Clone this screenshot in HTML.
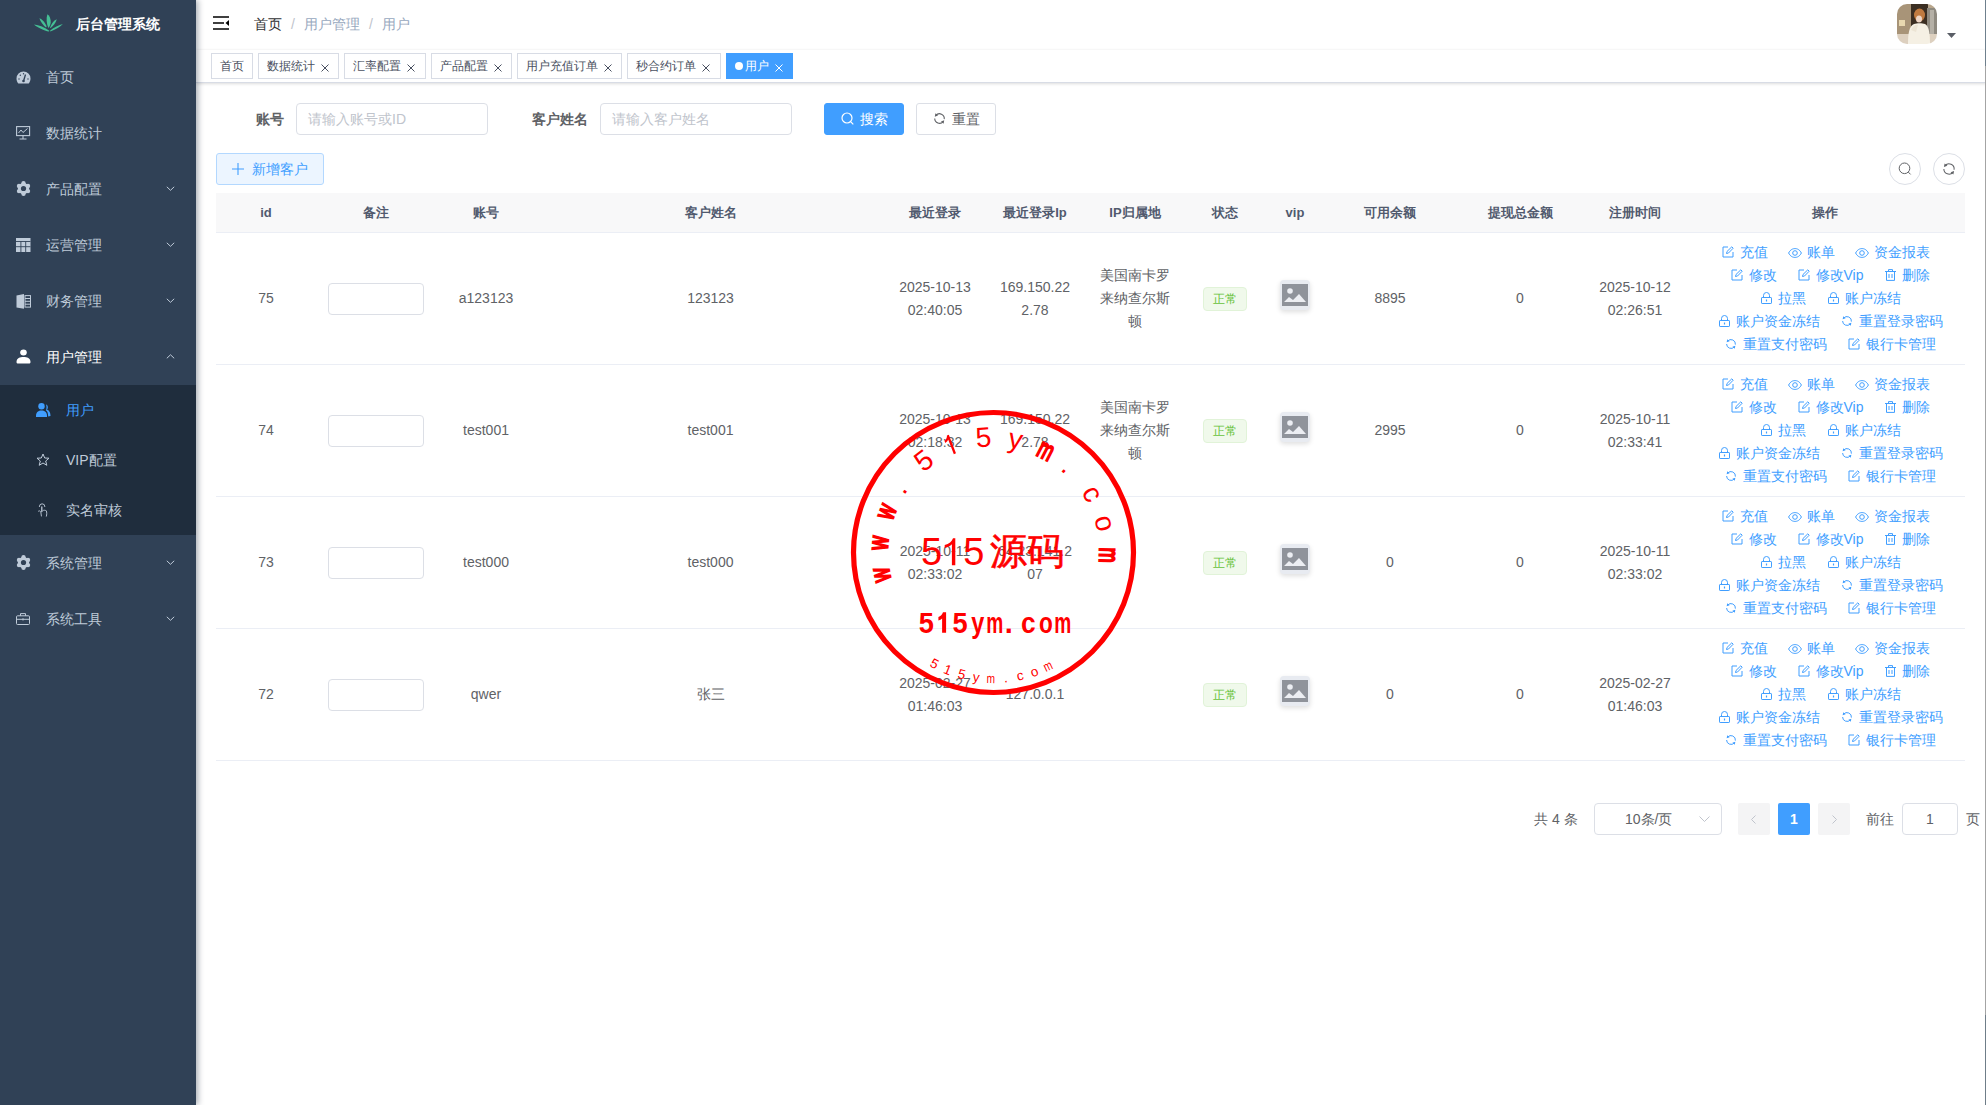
<!DOCTYPE html>
<html><head><meta charset="utf-8"><style>
*{box-sizing:border-box;margin:0;padding:0}
html,body{width:1986px;height:1105px;overflow:hidden;background:#fff;font-family:"Liberation Sans", sans-serif;}
.abs{position:absolute}
#side{position:absolute;left:0;top:0;width:196px;height:1105px;background:#304156;box-shadow:2px 0 6px rgba(0,21,41,.35);z-index:3}
.mi{position:absolute;left:0;width:196px;height:56px;color:#bfcbd9;font-size:14px;line-height:56px}
.mi .t{position:absolute;left:46px;top:0}
.mi svg{position:absolute;left:16px}
.mi .arr{position:absolute;left:165px;top:25px}
.sub{position:absolute;left:0;top:385px;width:196px;height:150px;background:#1f2d3d}
.si{position:absolute;left:0;width:196px;height:50px;color:#bfcbd9;font-size:14px;line-height:50px}
.si .t{position:absolute;left:66px;top:0}
.si svg{position:absolute;left:36px}
#nav{position:absolute;left:196px;top:0;width:1790px;height:50px;background:#fff;box-shadow:0 1px 4px rgba(0,21,41,.08);z-index:1}
#tags{position:absolute;left:196px;top:50px;width:1790px;height:33px;background:#fff;border-bottom:1px solid #d8dce5;box-shadow:0 1px 3px 0 rgba(0,0,0,.12),0 0 3px 0 rgba(0,0,0,.04);z-index:1}
.tag{position:absolute;top:3px;height:26px;line-height:24px;border:1px solid #d8dce5;color:#495060;font-size:12px;padding:0 8px;background:#fff;white-space:nowrap}
.tag .x{display:inline-block;margin-left:6px;vertical-align:-2px}
.lbl{position:absolute;font-size:14px;font-weight:bold;color:#606266;line-height:32px}
.inp{position:absolute;height:32px;border:1px solid #dcdfe6;border-radius:4px;background:#fff;color:#c0c4cc;font-size:14px;line-height:30px;padding-left:11px;white-space:nowrap}
.btn{position:absolute;height:32px;border-radius:3px;font-size:14px;line-height:30px;text-align:center;white-space:nowrap}
.th{position:absolute;top:193px;height:40px;background:#f8f8f9;border-bottom:1px solid #ebeef5;color:#515a6e;font-size:13px;font-weight:bold;line-height:39px;text-align:center}
.row{position:absolute;left:216px;width:1749px;height:132px;border-bottom:1px solid #ebeef5}
.c{position:absolute;top:0;height:131px;display:flex;align-items:center;justify-content:center;text-align:center;font-size:14px;color:#606266;line-height:23px;padding:0 10px}
.ops{color:#409eff;font-size:14px;line-height:23px;white-space:nowrap}
.op{display:inline-block;margin:0 10px}
.op .ic{display:inline-block;width:14px;text-align:center;margin-right:5px}
.op svg{vertical-align:-1px}
</style></head>
<body>
<div id="side"><svg class="abs" style="left:30px;top:10px" width="40" height="26" viewBox="0 0 40 26"><g fill="#45bf95"><path d="M18.4 17.9 C16.5 14 16 8 17.4 4.2 C19.5 5.5 21 9 20.7 12.5 C20.4 15 19.5 17 18.4 17.9 Z"/><path d="M16 17.4 C13.5 15.5 10.5 12 9.4 8.2 C12.5 9.5 15.5 13 16.6 16.5 Z"/><path d="M20 17.9 C21 14 23.5 10.5 26.8 9.2 C26 12.5 23 16 20.7 18 Z"/><path d="M19 21.6 C14 20.5 7.5 17.5 4 14.4 C9 14.8 15 17.5 19.3 20.7 Z"/><path d="M20 20.7 C24 17.5 29 15 32.9 14.1 C30 17 25 19.8 20.3 21.4 Z"/></g></svg><div class="abs" style="left:76px;top:14px;color:#fff;font-weight:bold;font-size:14px;line-height:20px;white-space:nowrap">后台管理系统</div><div class="mi" style="top:49px;color:#bfcbd9"><svg width="15" height="13" viewBox="0 0 15 13" style="top:22px"><path d="M7.5 0.5 A7 7 0 0 0 0.5 7.5 C0.5 9.5 1.2 11.3 2.3 12.5 L12.7 12.5 C13.8 11.3 14.5 9.5 14.5 7.5 A7 7 0 0 0 7.5 0.5Z" fill="#bfcbd9"/><path d="M9.5 3.5 L7.8 9.3" stroke="#304156" stroke-width="1.3"/><circle cx="7.5" cy="10" r="1.3" fill="#304156"/><circle cx="3" cy="8" r=".7" fill="#304156"/><circle cx="12" cy="8" r=".7" fill="#304156"/><circle cx="4.3" cy="4.3" r=".7" fill="#304156"/><circle cx="7.5" cy="2.8" r=".7" fill="#304156"/></svg><span class="t">首页</span></div><div class="mi" style="top:105px;color:#bfcbd9"><svg width="15" height="14" viewBox="0 0 15 14" style="top:21px"><rect x="0.6" y="0.6" width="13" height="9" fill="none" stroke="#bfcbd9" stroke-width="1.1"/><path d="M2.5 7 L5 4 L7 6.5 L11.5 2.5" fill="none" stroke="#bfcbd9" stroke-width="1"/><path d="M7 9.6 V12.5 M3.5 13 H10.5" stroke="#bfcbd9" stroke-width="1.1"/></svg><span class="t">数据统计</span></div><div class="mi" style="top:161px;color:#bfcbd9"><svg width="15" height="15" viewBox="0 0 15 15" style="top:20px"><g fill="#bfcbd9"><circle cx="7.5" cy="7.5" r="5.6"/><circle cx="12.00" cy="10.10" r="2.2"/><circle cx="7.50" cy="12.70" r="2.2"/><circle cx="3.00" cy="10.10" r="2.2"/><circle cx="3.00" cy="4.90" r="2.2"/><circle cx="7.50" cy="2.30" r="2.2"/><circle cx="12.00" cy="4.90" r="2.2"/></g><circle cx="7.5" cy="7.5" r="2.6" fill="#304156"/></svg><span class="t">产品配置</span><svg class="arr" width="9" height="5" viewBox="0 0 9 5" style="top:25px;left:166px"><path d="M0.8 0.8 L4.5 4.3 L8.2 0.8" fill="none" stroke="#bfcbd9" stroke-width="1"/></svg></div><div class="mi" style="top:217px;color:#bfcbd9"><svg width="15" height="14" viewBox="0 0 15 14" style="top:21px"><rect x="0" y="0" width="14.5" height="14" fill="#bfcbd9"/><path d="M0 3.5 H14.5 M0 8.7 H14.5 M4.9 3.5 V14 M9.7 3.5 V14" stroke="#304156" stroke-width="0.9"/></svg><span class="t">运营管理</span><svg class="arr" width="9" height="5" viewBox="0 0 9 5" style="top:25px;left:166px"><path d="M0.8 0.8 L4.5 4.3 L8.2 0.8" fill="none" stroke="#bfcbd9" stroke-width="1"/></svg></div><div class="mi" style="top:273px;color:#bfcbd9"><svg width="15" height="15" viewBox="0 0 15 15" style="top:21px"><path d="M0.5 1.5 L8 0 L8 14.8 L0.5 13.5 Z" fill="#bfcbd9"/><rect x="9" y="1.6" width="5.5" height="11.5" fill="none" stroke="#bfcbd9" stroke-width="1"/><path d="M9 4.5 H14.5 M9 7.3 H14.5 M9 10.2 H14.5" stroke="#bfcbd9" stroke-width="1"/></svg><span class="t">财务管理</span><svg class="arr" width="9" height="5" viewBox="0 0 9 5" style="top:25px;left:166px"><path d="M0.8 0.8 L4.5 4.3 L8.2 0.8" fill="none" stroke="#bfcbd9" stroke-width="1"/></svg></div><div class="mi" style="top:329px;color:#fff"><svg width="15" height="15" viewBox="0 0 15 15" style="top:20px"><ellipse cx="7.5" cy="3.5" rx="3.3" ry="3" fill="#fff"/><path d="M0.5 13 C0.5 9 4 8 7.5 8 C11 8 14.5 9 14.5 13 C14.5 14.2 13.8 14.5 13 14.5 H2 C1.2 14.5 0.5 14.2 0.5 13Z" fill="#fff"/></svg><span class="t">用户管理</span><svg class="arr" width="9" height="5" viewBox="0 0 9 5" style="top:25px;left:166px"><path d="M0.8 4.3 L4.5 0.8 L8.2 4.3" fill="none" stroke="#bfcbd9" stroke-width="1"/></svg></div><div class="sub"><div class="si" style="top:0px;color:#409eff"><svg width="15" height="14" viewBox="0 0 15 14" style="top:18px"><circle cx="5.5" cy="3.3" r="3.2" fill="#409eff"/><path d="M0 13 C0 9 2.5 7.5 5.5 7.5 C8.5 7.5 11 9 11 13 V14 H0Z" fill="#409eff"/><path d="M10 1.5 C12 2 12.5 5 11 6.5 C13.5 7.5 14.5 10 14.5 13 L12.2 13.5 C12 10 11.5 8.5 10 7.6 C10.5 6 10.8 3.5 10 1.5Z" fill="#409eff"/></svg><span class="t">用户</span></div><div class="si" style="top:50px;color:#bfcbd9"><svg width="14" height="14" viewBox="0 0 14 14" style="top:18px"><path d="M7 1 L8.7 5 L13 5.2 L9.7 8 L10.8 12.3 L7 10 L3.2 12.3 L4.3 8 L1 5.2 L5.3 5Z" fill="none" stroke="#bfcbd9" stroke-width="1"/></svg><span class="t">VIP配置</span></div><div class="si" style="top:100px;color:#bfcbd9"><svg width="14" height="17" viewBox="0 0 14 17" style="top:17px"><g fill="none" stroke="#bfcbd9" stroke-width="0.9" stroke-linecap="round"><path d="M3.3 4.6 A2.8 2.8 0 0 1 8.9 4.6"/><path d="M5.8 5 V9.6" stroke-width="1.3"/><path d="M2.4 9.2 C3 8.5 4.2 8.8 4.8 9.8 L5.4 14"/><path d="M6.8 8.6 C7.8 7.9 9.3 8.2 10.3 8.8 C10.9 10.2 10.9 12.5 10.4 14.2"/></g></svg><span class="t">实名审核</span></div></div><div class="mi" style="top:535px"><svg width="15" height="15" viewBox="0 0 15 15" style="top:20px"><g fill="#bfcbd9"><circle cx="7.5" cy="7.5" r="5.6"/><circle cx="12.00" cy="10.10" r="2.2"/><circle cx="7.50" cy="12.70" r="2.2"/><circle cx="3.00" cy="10.10" r="2.2"/><circle cx="3.00" cy="4.90" r="2.2"/><circle cx="7.50" cy="2.30" r="2.2"/><circle cx="12.00" cy="4.90" r="2.2"/></g><circle cx="7.5" cy="7.5" r="2.6" fill="#304156"/></svg><span class="t">系统管理</span><svg class="arr" width="9" height="5" viewBox="0 0 9 5" style="top:25px;left:166px"><path d="M0.8 0.8 L4.5 4.3 L8.2 0.8" fill="none" stroke="#bfcbd9" stroke-width="1"/></svg></div><div class="mi" style="top:591px"><svg width="14" height="12" viewBox="0 0 14 12" style="top:22px"><rect x="0.5" y="2.8" width="13" height="8.7" rx="1" fill="none" stroke="#bfcbd9" stroke-width="1"/><path d="M4.5 2.8 V0.6 H9.5 V2.8 M0.5 6.3 H13.5 M7 5.3 V7.5" fill="none" stroke="#bfcbd9" stroke-width="1"/></svg><span class="t">系统工具</span><svg class="arr" width="9" height="5" viewBox="0 0 9 5" style="top:25px;left:166px"><path d="M0.8 0.8 L4.5 4.3 L8.2 0.8" fill="none" stroke="#bfcbd9" stroke-width="1"/></svg></div></div>
<div id="nav"><svg class="abs" style="left:17px;top:16px" width="16" height="14" viewBox="0 0 16 14"><path d="M0 1 H16 M0 7 H11 M0 13 H16" stroke="#000" stroke-width="1.6"/><path d="M16 4 V10 L12.5 7Z" fill="#000"/></svg><div class="abs" style="left:58px;top:0;line-height:48px;font-size:14px;white-space:nowrap"><span style="color:#303133">首页</span><span style="color:#c0c4cc;margin:0 9px">/</span><span style="color:#97a8be">用户管理</span><span style="color:#c0c4cc;margin:0 9px">/</span><span style="color:#97a8be">用户</span></div><svg class="abs" style="left:1701px;top:4px" width="40" height="40" viewBox="0 0 40 40"><defs><clipPath id="avc"><rect width="40" height="40" rx="10"/></clipPath><filter id="avb"><feGaussianBlur stdDeviation="0.7"/></filter></defs><g clip-path="url(#avc)"><g filter="url(#avb)"><rect width="40" height="40" fill="#b9a68c"/><rect x="0" y="0" width="14" height="30" fill="#a89478"/><rect x="2" y="16" width="6" height="6" fill="#e8d8b0"/><rect x="14" y="0" width="17" height="24" fill="#3a2e22"/><rect x="30" y="4" width="10" height="30" fill="#8f8a80"/><rect x="33" y="6" width="4" height="26" fill="#b5b0a6"/><rect x="0" y="30" width="40" height="10" fill="#ddd0bf"/><ellipse cx="22.5" cy="11" rx="5.5" ry="6.5" fill="#c07a40"/><ellipse cx="22" cy="15" rx="3" ry="3.5" fill="#eed6c6"/><path d="M11 40 C11 30 12 22 17 20 C20 19 25 19 28 20 C32 22 33 30 33 40Z" fill="#f5f0e4"/><path d="M14 26 C16 22 19 20 21 21 L19 28 Z" fill="#ece4d4"/></g></g></svg><svg class="abs" style="left:1751px;top:33px" width="9" height="5" viewBox="0 0 9 5"><path d="M0 0 H9 L4.5 5Z" fill="#5a5e66"/></svg></div>
<div id="tags"><div class="tag" style="left:15px;width:42px">首页</div><div class="tag" style="left:62px;width:81px">数据统计<svg class="x" width="8" height="8" viewBox="0 0 8 8"><path d="M0.5 0.5 L7.5 7.5 M7.5 0.5 L0.5 7.5" stroke="#495060" stroke-width="1"/></svg></div><div class="tag" style="left:148px;width:82px">汇率配置<svg class="x" width="8" height="8" viewBox="0 0 8 8"><path d="M0.5 0.5 L7.5 7.5 M7.5 0.5 L0.5 7.5" stroke="#495060" stroke-width="1"/></svg></div><div class="tag" style="left:235px;width:81px">产品配置<svg class="x" width="8" height="8" viewBox="0 0 8 8"><path d="M0.5 0.5 L7.5 7.5 M7.5 0.5 L0.5 7.5" stroke="#495060" stroke-width="1"/></svg></div><div class="tag" style="left:321px;width:105px">用户充值订单<svg class="x" width="8" height="8" viewBox="0 0 8 8"><path d="M0.5 0.5 L7.5 7.5 M7.5 0.5 L0.5 7.5" stroke="#495060" stroke-width="1"/></svg></div><div class="tag" style="left:431px;width:94px">秒合约订单<svg class="x" width="8" height="8" viewBox="0 0 8 8"><path d="M0.5 0.5 L7.5 7.5 M7.5 0.5 L0.5 7.5" stroke="#495060" stroke-width="1"/></svg></div><div class="tag" style="left:530px;width:67px;background:#409eff;border-color:#409eff;color:#fff"><span style="display:inline-block;width:8px;height:8px;border-radius:50%;background:#fff;margin-right:2px;vertical-align:0"></span>用户<svg class="x" width="8" height="8" viewBox="0 0 8 8"><path d="M0.5 0.5 L7.5 7.5 M7.5 0.5 L0.5 7.5" stroke="#fff" stroke-width="1"/></svg></div></div>
<div class="lbl" style="left:256px;top:103px">账号</div><div class="inp" style="left:296px;top:103px;width:192px">请输入账号或ID</div><div class="lbl" style="left:532px;top:103px">客户姓名</div><div class="inp" style="left:600px;top:103px;width:192px">请输入客户姓名</div><div class="btn" style="left:824px;top:103px;width:80px;background:#409eff;border:1px solid #409eff;color:#fff"><svg width="13" height="13" viewBox="0 0 13 13" style="vertical-align:-1px;margin-right:6px"><circle cx="6" cy="6" r="5" fill="none" stroke="#fff" stroke-width="1.2"/><path d="M9.6 9.6 L12.3 12.3" stroke="#fff" stroke-width="1.2"/></svg>搜索</div><div class="btn" style="left:916px;top:103px;width:80px;background:#fff;border:1px solid #dcdfe6;color:#606266"><svg width="13" height="13" viewBox="0 0 12 12" style="vertical-align:-1px;margin-right:6px"><path d="M2.63 3.17 A4.4 4.4 0 0 1 10.36 6.61 M1.60 6.00 A4.4 4.4 0 0 0 9.37 8.83" fill="none" stroke="#606266" stroke-width="1.0"/><path d="M1.64 4.35 L2.26 1.22 L4.62 3.20Z M10.36 7.65 L9.74 10.78 L7.38 8.80Z" fill="#606266"/></svg>重置</div><div class="btn" style="left:216px;top:153px;width:108px;background:#ecf5ff;border:1px solid #b3d8ff;color:#409eff"><svg width="12" height="12" viewBox="0 0 12 12" style="vertical-align:-1px;margin-right:8px"><path d="M6 0 V12 M0 6 H12" stroke="#409eff" stroke-width="1.1"/></svg>新增客户</div><div class="abs" style="left:1889px;top:153px;width:32px;height:32px;border:1px solid #dcdfe6;border-radius:50%"><svg class="abs" style="left:8px;top:8px" width="14" height="14" viewBox="0 0 14 14"><circle cx="6.5" cy="6.3" r="5.3" fill="none" stroke="#606266" stroke-width="1"/><path d="M10.3 10.1 L12.6 12.4" stroke="#606266" stroke-width="1"/></svg></div><div class="abs" style="left:1933px;top:153px;width:32px;height:32px;border:1px solid #dcdfe6;border-radius:50%"><svg class="abs" style="left:8px;top:8px" width="14" height="14" viewBox="0 0 12 12"><path d="M2.63 3.17 A4.4 4.4 0 0 1 10.36 6.61 M1.60 6.00 A4.4 4.4 0 0 0 9.37 8.83" fill="none" stroke="#606266" stroke-width="0.9"/><path d="M1.64 4.35 L2.26 1.22 L4.62 3.20Z M10.36 7.65 L9.74 10.78 L7.38 8.80Z" fill="#606266"/></svg></div><div class="th" style="left:216px;width:100px">id</div><div class="th" style="left:316px;width:120px">备注</div><div class="th" style="left:436px;width:100px">账号</div><div class="th" style="left:536px;width:349px">客户姓名</div><div class="th" style="left:885px;width:100px">最近登录</div><div class="th" style="left:985px;width:100px">最近登录Ip</div><div class="th" style="left:1085px;width:100px">IP归属地</div><div class="th" style="left:1185px;width:80px">状态</div><div class="th" style="left:1265px;width:60px">vip</div><div class="th" style="left:1325px;width:130px">可用余额</div><div class="th" style="left:1455px;width:130px">提现总金额</div><div class="th" style="left:1585px;width:100px">注册时间</div><div class="th" style="left:1685px;width:280px">操作</div><div class="row" style="top:233px"><div class="c" style="left:0px;width:100px">75</div><div class="c" style="left:100px;width:120px"><div style="width:96px;height:32px;border:1px solid #dcdfe6;border-radius:4px"></div></div><div class="c" style="left:220px;width:100px">a123123</div><div class="c" style="left:320px;width:349px">123123</div><div class="c" style="left:669px;width:100px">2025-10-13<br>02:40:05</div><div class="c" style="left:769px;width:100px">169.150.22<br>2.78</div><div class="c" style="left:869px;width:100px">美国南卡罗<br>来纳查尔斯<br>顿</div><div class="c" style="left:969px;width:80px"><span style="display:inline-block;height:24px;line-height:22px;width:44px;font-size:12px;color:#67c23a;background:#f0f9eb;border:1px solid #e1f3d8;border-radius:4px">正常</span></div><div class="c" style="left:1049px;width:60px"><div style="width:30px;height:30px;border-radius:4px;background:#e8ebf1;box-shadow:0 2px 5px rgba(0,0,0,.13);position:relative;top:-4px"><svg style="position:absolute;left:2px;top:4px" width="26" height="22" viewBox="0 0 26 22"><rect width="26" height="22" fill="#8f939b"/><circle cx="8" cy="7" r="2.8" fill="#eceef3"/><path d="M2 18 L7 13 L11 16 L17 10 L24 18Z" fill="#eceef3"/></svg></div></div><div class="c" style="left:1109px;width:130px">8895</div><div class="c" style="left:1239px;width:130px">0</div><div class="c" style="left:1369px;width:100px">2025-10-12<br>02:26:51</div><div class="c" style="left:1469px;width:280px"><div class="ops"><div><span class="op"><span class="ic"><svg width="12" height="12" viewBox="0 0 12 12"><path d="M6 1 H1 V11 H11 V6" fill="none" stroke="#409eff" stroke-width="1"/><path d="M4.5 7.5 L5 5.5 L9.8 0.8 L11.2 2.2 L6.5 7 Z" fill="none" stroke="#409eff" stroke-width="1"/></svg></span>充值</span><span class="op"><span class="ic"><svg width="14" height="10" viewBox="0 0 14 10"><path d="M0.6 5 C2.5 1.5 4.8 0.6 7 0.6 C9.2 0.6 11.5 1.5 13.4 5 C11.5 8.5 9.2 9.4 7 9.4 C4.8 9.4 2.5 8.5 0.6 5Z" fill="none" stroke="#409eff" stroke-width="1"/><circle cx="7" cy="5" r="2.3" fill="none" stroke="#409eff" stroke-width="1"/></svg></span>账单</span><span class="op"><span class="ic"><svg width="14" height="10" viewBox="0 0 14 10"><path d="M0.6 5 C2.5 1.5 4.8 0.6 7 0.6 C9.2 0.6 11.5 1.5 13.4 5 C11.5 8.5 9.2 9.4 7 9.4 C4.8 9.4 2.5 8.5 0.6 5Z" fill="none" stroke="#409eff" stroke-width="1"/><circle cx="7" cy="5" r="2.3" fill="none" stroke="#409eff" stroke-width="1"/></svg></span>资金报表</span></div><div style="padding-left:10px"><span class="op"><span class="ic"><svg width="12" height="12" viewBox="0 0 12 12"><path d="M6 1 H1 V11 H11 V6" fill="none" stroke="#409eff" stroke-width="1"/><path d="M4.5 7.5 L5 5.5 L9.8 0.8 L11.2 2.2 L6.5 7 Z" fill="none" stroke="#409eff" stroke-width="1"/></svg></span>修改</span><span class="op"><span class="ic"><svg width="12" height="12" viewBox="0 0 12 12"><path d="M6 1 H1 V11 H11 V6" fill="none" stroke="#409eff" stroke-width="1"/><path d="M4.5 7.5 L5 5.5 L9.8 0.8 L11.2 2.2 L6.5 7 Z" fill="none" stroke="#409eff" stroke-width="1"/></svg></span>修改Vip</span><span class="op"><span class="ic"><svg width="11" height="12" viewBox="0 0 11 12"><path d="M0 2.5 H11 M3.5 2.5 V0.6 H7.5 V2.5 M1.5 2.5 V11.4 H9.5 V2.5 M4 5 V9 M7 5 V9" fill="none" stroke="#409eff" stroke-width="1"/></svg></span>删除</span></div><div style="padding-left:10px"><span class="op"><span class="ic"><svg width="11" height="12" viewBox="0 0 11 12"><path d="M2.5 5.5 V3.5 A3 3 0 0 1 8.5 3.5 V5.5" fill="none" stroke="#409eff" stroke-width="1"/><rect x="0.5" y="5.5" width="10" height="6" rx=".6" fill="none" stroke="#409eff" stroke-width="1"/><path d="M5.5 7.5 V9.5" stroke="#409eff" stroke-width="1.2"/></svg></span>拉黑</span><span class="op"><span class="ic"><svg width="11" height="12" viewBox="0 0 11 12"><path d="M2.5 5.5 V3.5 A3 3 0 0 1 8.5 3.5 V5.5" fill="none" stroke="#409eff" stroke-width="1"/><rect x="0.5" y="5.5" width="10" height="6" rx=".6" fill="none" stroke="#409eff" stroke-width="1"/><path d="M5.5 7.5 V9.5" stroke="#409eff" stroke-width="1.2"/></svg></span>账户冻结</span></div><div style="padding-left:10px"><span class="op"><span class="ic"><svg width="11" height="12" viewBox="0 0 11 12"><path d="M2.5 5.5 V3.5 A3 3 0 0 1 8.5 3.5 V5.5" fill="none" stroke="#409eff" stroke-width="1"/><rect x="0.5" y="5.5" width="10" height="6" rx=".6" fill="none" stroke="#409eff" stroke-width="1"/><path d="M5.5 7.5 V9.5" stroke="#409eff" stroke-width="1.2"/></svg></span>账户资金冻结</span><span class="op"><span class="ic"><svg width="12" height="12" viewBox="0 0 12 12"><path d="M2.63 3.17 A4.4 4.4 0 0 1 10.36 6.61 M1.60 6.00 A4.4 4.4 0 0 0 9.37 8.83" fill="none" stroke="#409eff" stroke-width="1.0"/><path d="M1.64 4.35 L2.26 1.22 L4.62 3.20Z M10.36 7.65 L9.74 10.78 L7.38 8.80Z" fill="#409eff"/></svg></span>重置登录密码</span></div><div style="padding-left:10px"><span class="op"><span class="ic"><svg width="12" height="12" viewBox="0 0 12 12"><path d="M2.63 3.17 A4.4 4.4 0 0 1 10.36 6.61 M1.60 6.00 A4.4 4.4 0 0 0 9.37 8.83" fill="none" stroke="#409eff" stroke-width="1.0"/><path d="M1.64 4.35 L2.26 1.22 L4.62 3.20Z M10.36 7.65 L9.74 10.78 L7.38 8.80Z" fill="#409eff"/></svg></span>重置支付密码</span><span class="op"><span class="ic"><svg width="12" height="12" viewBox="0 0 12 12"><path d="M6 1 H1 V11 H11 V6" fill="none" stroke="#409eff" stroke-width="1"/><path d="M4.5 7.5 L5 5.5 L9.8 0.8 L11.2 2.2 L6.5 7 Z" fill="none" stroke="#409eff" stroke-width="1"/></svg></span>银行卡管理</span></div></div></div></div><div class="row" style="top:365px"><div class="c" style="left:0px;width:100px">74</div><div class="c" style="left:100px;width:120px"><div style="width:96px;height:32px;border:1px solid #dcdfe6;border-radius:4px"></div></div><div class="c" style="left:220px;width:100px">test001</div><div class="c" style="left:320px;width:349px">test001</div><div class="c" style="left:669px;width:100px">2025-10-13<br>02:18:32</div><div class="c" style="left:769px;width:100px">169.150.22<br>2.78</div><div class="c" style="left:869px;width:100px">美国南卡罗<br>来纳查尔斯<br>顿</div><div class="c" style="left:969px;width:80px"><span style="display:inline-block;height:24px;line-height:22px;width:44px;font-size:12px;color:#67c23a;background:#f0f9eb;border:1px solid #e1f3d8;border-radius:4px">正常</span></div><div class="c" style="left:1049px;width:60px"><div style="width:30px;height:30px;border-radius:4px;background:#e8ebf1;box-shadow:0 2px 5px rgba(0,0,0,.13);position:relative;top:-4px"><svg style="position:absolute;left:2px;top:4px" width="26" height="22" viewBox="0 0 26 22"><rect width="26" height="22" fill="#8f939b"/><circle cx="8" cy="7" r="2.8" fill="#eceef3"/><path d="M2 18 L7 13 L11 16 L17 10 L24 18Z" fill="#eceef3"/></svg></div></div><div class="c" style="left:1109px;width:130px">2995</div><div class="c" style="left:1239px;width:130px">0</div><div class="c" style="left:1369px;width:100px">2025-10-11<br>02:33:41</div><div class="c" style="left:1469px;width:280px"><div class="ops"><div><span class="op"><span class="ic"><svg width="12" height="12" viewBox="0 0 12 12"><path d="M6 1 H1 V11 H11 V6" fill="none" stroke="#409eff" stroke-width="1"/><path d="M4.5 7.5 L5 5.5 L9.8 0.8 L11.2 2.2 L6.5 7 Z" fill="none" stroke="#409eff" stroke-width="1"/></svg></span>充值</span><span class="op"><span class="ic"><svg width="14" height="10" viewBox="0 0 14 10"><path d="M0.6 5 C2.5 1.5 4.8 0.6 7 0.6 C9.2 0.6 11.5 1.5 13.4 5 C11.5 8.5 9.2 9.4 7 9.4 C4.8 9.4 2.5 8.5 0.6 5Z" fill="none" stroke="#409eff" stroke-width="1"/><circle cx="7" cy="5" r="2.3" fill="none" stroke="#409eff" stroke-width="1"/></svg></span>账单</span><span class="op"><span class="ic"><svg width="14" height="10" viewBox="0 0 14 10"><path d="M0.6 5 C2.5 1.5 4.8 0.6 7 0.6 C9.2 0.6 11.5 1.5 13.4 5 C11.5 8.5 9.2 9.4 7 9.4 C4.8 9.4 2.5 8.5 0.6 5Z" fill="none" stroke="#409eff" stroke-width="1"/><circle cx="7" cy="5" r="2.3" fill="none" stroke="#409eff" stroke-width="1"/></svg></span>资金报表</span></div><div style="padding-left:10px"><span class="op"><span class="ic"><svg width="12" height="12" viewBox="0 0 12 12"><path d="M6 1 H1 V11 H11 V6" fill="none" stroke="#409eff" stroke-width="1"/><path d="M4.5 7.5 L5 5.5 L9.8 0.8 L11.2 2.2 L6.5 7 Z" fill="none" stroke="#409eff" stroke-width="1"/></svg></span>修改</span><span class="op"><span class="ic"><svg width="12" height="12" viewBox="0 0 12 12"><path d="M6 1 H1 V11 H11 V6" fill="none" stroke="#409eff" stroke-width="1"/><path d="M4.5 7.5 L5 5.5 L9.8 0.8 L11.2 2.2 L6.5 7 Z" fill="none" stroke="#409eff" stroke-width="1"/></svg></span>修改Vip</span><span class="op"><span class="ic"><svg width="11" height="12" viewBox="0 0 11 12"><path d="M0 2.5 H11 M3.5 2.5 V0.6 H7.5 V2.5 M1.5 2.5 V11.4 H9.5 V2.5 M4 5 V9 M7 5 V9" fill="none" stroke="#409eff" stroke-width="1"/></svg></span>删除</span></div><div style="padding-left:10px"><span class="op"><span class="ic"><svg width="11" height="12" viewBox="0 0 11 12"><path d="M2.5 5.5 V3.5 A3 3 0 0 1 8.5 3.5 V5.5" fill="none" stroke="#409eff" stroke-width="1"/><rect x="0.5" y="5.5" width="10" height="6" rx=".6" fill="none" stroke="#409eff" stroke-width="1"/><path d="M5.5 7.5 V9.5" stroke="#409eff" stroke-width="1.2"/></svg></span>拉黑</span><span class="op"><span class="ic"><svg width="11" height="12" viewBox="0 0 11 12"><path d="M2.5 5.5 V3.5 A3 3 0 0 1 8.5 3.5 V5.5" fill="none" stroke="#409eff" stroke-width="1"/><rect x="0.5" y="5.5" width="10" height="6" rx=".6" fill="none" stroke="#409eff" stroke-width="1"/><path d="M5.5 7.5 V9.5" stroke="#409eff" stroke-width="1.2"/></svg></span>账户冻结</span></div><div style="padding-left:10px"><span class="op"><span class="ic"><svg width="11" height="12" viewBox="0 0 11 12"><path d="M2.5 5.5 V3.5 A3 3 0 0 1 8.5 3.5 V5.5" fill="none" stroke="#409eff" stroke-width="1"/><rect x="0.5" y="5.5" width="10" height="6" rx=".6" fill="none" stroke="#409eff" stroke-width="1"/><path d="M5.5 7.5 V9.5" stroke="#409eff" stroke-width="1.2"/></svg></span>账户资金冻结</span><span class="op"><span class="ic"><svg width="12" height="12" viewBox="0 0 12 12"><path d="M2.63 3.17 A4.4 4.4 0 0 1 10.36 6.61 M1.60 6.00 A4.4 4.4 0 0 0 9.37 8.83" fill="none" stroke="#409eff" stroke-width="1.0"/><path d="M1.64 4.35 L2.26 1.22 L4.62 3.20Z M10.36 7.65 L9.74 10.78 L7.38 8.80Z" fill="#409eff"/></svg></span>重置登录密码</span></div><div style="padding-left:10px"><span class="op"><span class="ic"><svg width="12" height="12" viewBox="0 0 12 12"><path d="M2.63 3.17 A4.4 4.4 0 0 1 10.36 6.61 M1.60 6.00 A4.4 4.4 0 0 0 9.37 8.83" fill="none" stroke="#409eff" stroke-width="1.0"/><path d="M1.64 4.35 L2.26 1.22 L4.62 3.20Z M10.36 7.65 L9.74 10.78 L7.38 8.80Z" fill="#409eff"/></svg></span>重置支付密码</span><span class="op"><span class="ic"><svg width="12" height="12" viewBox="0 0 12 12"><path d="M6 1 H1 V11 H11 V6" fill="none" stroke="#409eff" stroke-width="1"/><path d="M4.5 7.5 L5 5.5 L9.8 0.8 L11.2 2.2 L6.5 7 Z" fill="none" stroke="#409eff" stroke-width="1"/></svg></span>银行卡管理</span></div></div></div></div><div class="row" style="top:497px"><div class="c" style="left:0px;width:100px">73</div><div class="c" style="left:100px;width:120px"><div style="width:96px;height:32px;border:1px solid #dcdfe6;border-radius:4px"></div></div><div class="c" style="left:220px;width:100px">test000</div><div class="c" style="left:320px;width:349px">test000</div><div class="c" style="left:669px;width:100px">2025-10-11<br>02:33:02</div><div class="c" style="left:769px;width:100px">64.23.141.2<br>07</div><div class="c" style="left:869px;width:100px"></div><div class="c" style="left:969px;width:80px"><span style="display:inline-block;height:24px;line-height:22px;width:44px;font-size:12px;color:#67c23a;background:#f0f9eb;border:1px solid #e1f3d8;border-radius:4px">正常</span></div><div class="c" style="left:1049px;width:60px"><div style="width:30px;height:30px;border-radius:4px;background:#e8ebf1;box-shadow:0 2px 5px rgba(0,0,0,.13);position:relative;top:-4px"><svg style="position:absolute;left:2px;top:4px" width="26" height="22" viewBox="0 0 26 22"><rect width="26" height="22" fill="#8f939b"/><circle cx="8" cy="7" r="2.8" fill="#eceef3"/><path d="M2 18 L7 13 L11 16 L17 10 L24 18Z" fill="#eceef3"/></svg></div></div><div class="c" style="left:1109px;width:130px">0</div><div class="c" style="left:1239px;width:130px">0</div><div class="c" style="left:1369px;width:100px">2025-10-11<br>02:33:02</div><div class="c" style="left:1469px;width:280px"><div class="ops"><div><span class="op"><span class="ic"><svg width="12" height="12" viewBox="0 0 12 12"><path d="M6 1 H1 V11 H11 V6" fill="none" stroke="#409eff" stroke-width="1"/><path d="M4.5 7.5 L5 5.5 L9.8 0.8 L11.2 2.2 L6.5 7 Z" fill="none" stroke="#409eff" stroke-width="1"/></svg></span>充值</span><span class="op"><span class="ic"><svg width="14" height="10" viewBox="0 0 14 10"><path d="M0.6 5 C2.5 1.5 4.8 0.6 7 0.6 C9.2 0.6 11.5 1.5 13.4 5 C11.5 8.5 9.2 9.4 7 9.4 C4.8 9.4 2.5 8.5 0.6 5Z" fill="none" stroke="#409eff" stroke-width="1"/><circle cx="7" cy="5" r="2.3" fill="none" stroke="#409eff" stroke-width="1"/></svg></span>账单</span><span class="op"><span class="ic"><svg width="14" height="10" viewBox="0 0 14 10"><path d="M0.6 5 C2.5 1.5 4.8 0.6 7 0.6 C9.2 0.6 11.5 1.5 13.4 5 C11.5 8.5 9.2 9.4 7 9.4 C4.8 9.4 2.5 8.5 0.6 5Z" fill="none" stroke="#409eff" stroke-width="1"/><circle cx="7" cy="5" r="2.3" fill="none" stroke="#409eff" stroke-width="1"/></svg></span>资金报表</span></div><div style="padding-left:10px"><span class="op"><span class="ic"><svg width="12" height="12" viewBox="0 0 12 12"><path d="M6 1 H1 V11 H11 V6" fill="none" stroke="#409eff" stroke-width="1"/><path d="M4.5 7.5 L5 5.5 L9.8 0.8 L11.2 2.2 L6.5 7 Z" fill="none" stroke="#409eff" stroke-width="1"/></svg></span>修改</span><span class="op"><span class="ic"><svg width="12" height="12" viewBox="0 0 12 12"><path d="M6 1 H1 V11 H11 V6" fill="none" stroke="#409eff" stroke-width="1"/><path d="M4.5 7.5 L5 5.5 L9.8 0.8 L11.2 2.2 L6.5 7 Z" fill="none" stroke="#409eff" stroke-width="1"/></svg></span>修改Vip</span><span class="op"><span class="ic"><svg width="11" height="12" viewBox="0 0 11 12"><path d="M0 2.5 H11 M3.5 2.5 V0.6 H7.5 V2.5 M1.5 2.5 V11.4 H9.5 V2.5 M4 5 V9 M7 5 V9" fill="none" stroke="#409eff" stroke-width="1"/></svg></span>删除</span></div><div style="padding-left:10px"><span class="op"><span class="ic"><svg width="11" height="12" viewBox="0 0 11 12"><path d="M2.5 5.5 V3.5 A3 3 0 0 1 8.5 3.5 V5.5" fill="none" stroke="#409eff" stroke-width="1"/><rect x="0.5" y="5.5" width="10" height="6" rx=".6" fill="none" stroke="#409eff" stroke-width="1"/><path d="M5.5 7.5 V9.5" stroke="#409eff" stroke-width="1.2"/></svg></span>拉黑</span><span class="op"><span class="ic"><svg width="11" height="12" viewBox="0 0 11 12"><path d="M2.5 5.5 V3.5 A3 3 0 0 1 8.5 3.5 V5.5" fill="none" stroke="#409eff" stroke-width="1"/><rect x="0.5" y="5.5" width="10" height="6" rx=".6" fill="none" stroke="#409eff" stroke-width="1"/><path d="M5.5 7.5 V9.5" stroke="#409eff" stroke-width="1.2"/></svg></span>账户冻结</span></div><div style="padding-left:10px"><span class="op"><span class="ic"><svg width="11" height="12" viewBox="0 0 11 12"><path d="M2.5 5.5 V3.5 A3 3 0 0 1 8.5 3.5 V5.5" fill="none" stroke="#409eff" stroke-width="1"/><rect x="0.5" y="5.5" width="10" height="6" rx=".6" fill="none" stroke="#409eff" stroke-width="1"/><path d="M5.5 7.5 V9.5" stroke="#409eff" stroke-width="1.2"/></svg></span>账户资金冻结</span><span class="op"><span class="ic"><svg width="12" height="12" viewBox="0 0 12 12"><path d="M2.63 3.17 A4.4 4.4 0 0 1 10.36 6.61 M1.60 6.00 A4.4 4.4 0 0 0 9.37 8.83" fill="none" stroke="#409eff" stroke-width="1.0"/><path d="M1.64 4.35 L2.26 1.22 L4.62 3.20Z M10.36 7.65 L9.74 10.78 L7.38 8.80Z" fill="#409eff"/></svg></span>重置登录密码</span></div><div style="padding-left:10px"><span class="op"><span class="ic"><svg width="12" height="12" viewBox="0 0 12 12"><path d="M2.63 3.17 A4.4 4.4 0 0 1 10.36 6.61 M1.60 6.00 A4.4 4.4 0 0 0 9.37 8.83" fill="none" stroke="#409eff" stroke-width="1.0"/><path d="M1.64 4.35 L2.26 1.22 L4.62 3.20Z M10.36 7.65 L9.74 10.78 L7.38 8.80Z" fill="#409eff"/></svg></span>重置支付密码</span><span class="op"><span class="ic"><svg width="12" height="12" viewBox="0 0 12 12"><path d="M6 1 H1 V11 H11 V6" fill="none" stroke="#409eff" stroke-width="1"/><path d="M4.5 7.5 L5 5.5 L9.8 0.8 L11.2 2.2 L6.5 7 Z" fill="none" stroke="#409eff" stroke-width="1"/></svg></span>银行卡管理</span></div></div></div></div><div class="row" style="top:629px"><div class="c" style="left:0px;width:100px">72</div><div class="c" style="left:100px;width:120px"><div style="width:96px;height:32px;border:1px solid #dcdfe6;border-radius:4px"></div></div><div class="c" style="left:220px;width:100px">qwer</div><div class="c" style="left:320px;width:349px">张三</div><div class="c" style="left:669px;width:100px">2025-02-27<br>01:46:03</div><div class="c" style="left:769px;width:100px">127.0.0.1</div><div class="c" style="left:869px;width:100px"></div><div class="c" style="left:969px;width:80px"><span style="display:inline-block;height:24px;line-height:22px;width:44px;font-size:12px;color:#67c23a;background:#f0f9eb;border:1px solid #e1f3d8;border-radius:4px">正常</span></div><div class="c" style="left:1049px;width:60px"><div style="width:30px;height:30px;border-radius:4px;background:#e8ebf1;box-shadow:0 2px 5px rgba(0,0,0,.13);position:relative;top:-4px"><svg style="position:absolute;left:2px;top:4px" width="26" height="22" viewBox="0 0 26 22"><rect width="26" height="22" fill="#8f939b"/><circle cx="8" cy="7" r="2.8" fill="#eceef3"/><path d="M2 18 L7 13 L11 16 L17 10 L24 18Z" fill="#eceef3"/></svg></div></div><div class="c" style="left:1109px;width:130px">0</div><div class="c" style="left:1239px;width:130px">0</div><div class="c" style="left:1369px;width:100px">2025-02-27<br>01:46:03</div><div class="c" style="left:1469px;width:280px"><div class="ops"><div><span class="op"><span class="ic"><svg width="12" height="12" viewBox="0 0 12 12"><path d="M6 1 H1 V11 H11 V6" fill="none" stroke="#409eff" stroke-width="1"/><path d="M4.5 7.5 L5 5.5 L9.8 0.8 L11.2 2.2 L6.5 7 Z" fill="none" stroke="#409eff" stroke-width="1"/></svg></span>充值</span><span class="op"><span class="ic"><svg width="14" height="10" viewBox="0 0 14 10"><path d="M0.6 5 C2.5 1.5 4.8 0.6 7 0.6 C9.2 0.6 11.5 1.5 13.4 5 C11.5 8.5 9.2 9.4 7 9.4 C4.8 9.4 2.5 8.5 0.6 5Z" fill="none" stroke="#409eff" stroke-width="1"/><circle cx="7" cy="5" r="2.3" fill="none" stroke="#409eff" stroke-width="1"/></svg></span>账单</span><span class="op"><span class="ic"><svg width="14" height="10" viewBox="0 0 14 10"><path d="M0.6 5 C2.5 1.5 4.8 0.6 7 0.6 C9.2 0.6 11.5 1.5 13.4 5 C11.5 8.5 9.2 9.4 7 9.4 C4.8 9.4 2.5 8.5 0.6 5Z" fill="none" stroke="#409eff" stroke-width="1"/><circle cx="7" cy="5" r="2.3" fill="none" stroke="#409eff" stroke-width="1"/></svg></span>资金报表</span></div><div style="padding-left:10px"><span class="op"><span class="ic"><svg width="12" height="12" viewBox="0 0 12 12"><path d="M6 1 H1 V11 H11 V6" fill="none" stroke="#409eff" stroke-width="1"/><path d="M4.5 7.5 L5 5.5 L9.8 0.8 L11.2 2.2 L6.5 7 Z" fill="none" stroke="#409eff" stroke-width="1"/></svg></span>修改</span><span class="op"><span class="ic"><svg width="12" height="12" viewBox="0 0 12 12"><path d="M6 1 H1 V11 H11 V6" fill="none" stroke="#409eff" stroke-width="1"/><path d="M4.5 7.5 L5 5.5 L9.8 0.8 L11.2 2.2 L6.5 7 Z" fill="none" stroke="#409eff" stroke-width="1"/></svg></span>修改Vip</span><span class="op"><span class="ic"><svg width="11" height="12" viewBox="0 0 11 12"><path d="M0 2.5 H11 M3.5 2.5 V0.6 H7.5 V2.5 M1.5 2.5 V11.4 H9.5 V2.5 M4 5 V9 M7 5 V9" fill="none" stroke="#409eff" stroke-width="1"/></svg></span>删除</span></div><div style="padding-left:10px"><span class="op"><span class="ic"><svg width="11" height="12" viewBox="0 0 11 12"><path d="M2.5 5.5 V3.5 A3 3 0 0 1 8.5 3.5 V5.5" fill="none" stroke="#409eff" stroke-width="1"/><rect x="0.5" y="5.5" width="10" height="6" rx=".6" fill="none" stroke="#409eff" stroke-width="1"/><path d="M5.5 7.5 V9.5" stroke="#409eff" stroke-width="1.2"/></svg></span>拉黑</span><span class="op"><span class="ic"><svg width="11" height="12" viewBox="0 0 11 12"><path d="M2.5 5.5 V3.5 A3 3 0 0 1 8.5 3.5 V5.5" fill="none" stroke="#409eff" stroke-width="1"/><rect x="0.5" y="5.5" width="10" height="6" rx=".6" fill="none" stroke="#409eff" stroke-width="1"/><path d="M5.5 7.5 V9.5" stroke="#409eff" stroke-width="1.2"/></svg></span>账户冻结</span></div><div style="padding-left:10px"><span class="op"><span class="ic"><svg width="11" height="12" viewBox="0 0 11 12"><path d="M2.5 5.5 V3.5 A3 3 0 0 1 8.5 3.5 V5.5" fill="none" stroke="#409eff" stroke-width="1"/><rect x="0.5" y="5.5" width="10" height="6" rx=".6" fill="none" stroke="#409eff" stroke-width="1"/><path d="M5.5 7.5 V9.5" stroke="#409eff" stroke-width="1.2"/></svg></span>账户资金冻结</span><span class="op"><span class="ic"><svg width="12" height="12" viewBox="0 0 12 12"><path d="M2.63 3.17 A4.4 4.4 0 0 1 10.36 6.61 M1.60 6.00 A4.4 4.4 0 0 0 9.37 8.83" fill="none" stroke="#409eff" stroke-width="1.0"/><path d="M1.64 4.35 L2.26 1.22 L4.62 3.20Z M10.36 7.65 L9.74 10.78 L7.38 8.80Z" fill="#409eff"/></svg></span>重置登录密码</span></div><div style="padding-left:10px"><span class="op"><span class="ic"><svg width="12" height="12" viewBox="0 0 12 12"><path d="M2.63 3.17 A4.4 4.4 0 0 1 10.36 6.61 M1.60 6.00 A4.4 4.4 0 0 0 9.37 8.83" fill="none" stroke="#409eff" stroke-width="1.0"/><path d="M1.64 4.35 L2.26 1.22 L4.62 3.20Z M10.36 7.65 L9.74 10.78 L7.38 8.80Z" fill="#409eff"/></svg></span>重置支付密码</span><span class="op"><span class="ic"><svg width="12" height="12" viewBox="0 0 12 12"><path d="M6 1 H1 V11 H11 V6" fill="none" stroke="#409eff" stroke-width="1"/><path d="M4.5 7.5 L5 5.5 L9.8 0.8 L11.2 2.2 L6.5 7 Z" fill="none" stroke="#409eff" stroke-width="1"/></svg></span>银行卡管理</span></div></div></div></div><div class="abs" style="left:1534px;top:803px;line-height:32px;font-size:14px;color:#606266;white-space:nowrap">共 4 条</div><div class="abs" style="left:1594px;top:803px;width:128px;height:32px;border:1px solid #dcdfe6;border-radius:4px;font-size:14px;color:#606266;line-height:30px;padding-left:30px">10条/页<svg class="abs" style="left:104px;top:12px" width="11" height="6" viewBox="0 0 11 6"><path d="M0.5 0.5 L5.5 5.5 L10.5 0.5" fill="none" stroke="#c0c4cc" stroke-width="1"/></svg></div><div class="abs" style="left:1738px;top:803px;width:32px;height:32px;background:#f4f4f5;border-radius:2px"><svg class="abs" style="left:13px;top:12px" width="5" height="9" viewBox="0 0 5 9"><path d="M4.5 0.5 L0.5 4.5 L4.5 8.5" fill="none" stroke="#c0c4cc" stroke-width="1"/></svg></div><div class="abs" style="left:1778px;top:803px;width:32px;height:32px;background:#409eff;border-radius:2px;color:#fff;font-weight:bold;font-size:14px;line-height:32px;text-align:center">1</div><div class="abs" style="left:1818px;top:803px;width:32px;height:32px;background:#f4f4f5;border-radius:2px"><svg class="abs" style="left:14px;top:12px" width="5" height="9" viewBox="0 0 5 9"><path d="M0.5 0.5 L4.5 4.5 L0.5 8.5" fill="none" stroke="#c0c4cc" stroke-width="1"/></svg></div><div class="abs" style="left:1866px;top:803px;line-height:32px;font-size:14px;color:#606266;white-space:nowrap">前往</div><div class="abs" style="left:1902px;top:803px;width:56px;height:32px;border:1px solid #dcdfe6;border-radius:4px;font-size:14px;color:#606266;line-height:30px;text-align:center">1</div><div class="abs" style="left:1966px;top:803px;line-height:32px;font-size:14px;color:#606266;white-space:nowrap">页</div><div class="abs" style="left:1985px;top:0;width:1px;height:1105px;background:#a4a4a4;z-index:5"></div><div class="abs" style="left:1985px;top:0;width:1px;height:66px;background:#6f808d;z-index:5"></div><div class="abs" style="left:1985px;top:1015px;width:1px;height:90px;background:#6f7d88;z-index:5"></div><svg class="abs" style="left:0;top:0;z-index:10" width="1986" height="1105" viewBox="0 0 1986 1105"><circle cx="993.5" cy="552.5" r="140" fill="none" stroke="#ff0000" stroke-width="5.2"/><text transform="translate(993.5,552.5) rotate(-101.30) translate(0,-106) scale(0.68,1)" text-anchor="middle" font-family="Liberation Sans" font-size="28" fill="#ff0000" stroke="#ff0000" stroke-width="2.2">w</text><text transform="translate(993.5,552.5) rotate(-85.25) translate(0,-106) scale(0.68,1)" text-anchor="middle" font-family="Liberation Sans" font-size="28" fill="#ff0000" stroke="#ff0000" stroke-width="2.2">w</text><text transform="translate(993.5,552.5) rotate(-69.20) translate(0,-106) scale(0.68,1)" text-anchor="middle" font-family="Liberation Sans" font-size="28" fill="#ff0000" stroke="#ff0000" stroke-width="2.2">w</text><text transform="translate(993.5,552.5) rotate(-55.55) translate(0,-106) scale(1,1)" text-anchor="middle" font-family="Liberation Sans" font-size="28" fill="#ff0000">.</text><text transform="translate(993.5,552.5) rotate(-37.10) translate(0,-106) scale(1,1)" text-anchor="middle" font-family="Liberation Sans" font-size="28" fill="#ff0000">5</text><path transform="translate(993.5,552.5) rotate(-21.05) translate(0,-106)" d="M0.6 0 V-20 H-1.4 C-2 -17.8 -3.6 -16.5 -5.6 -16 V-13.6 C-3.6 -14.1 -2.3 -14.9 -1.7 -15.8 V0 Z" fill="#ff0000"/><text transform="translate(993.5,552.5) rotate(-5.00) translate(0,-106) scale(1,1)" text-anchor="middle" font-family="Liberation Sans" font-size="28" fill="#ff0000">5</text><text transform="translate(993.5,552.5) rotate(11.05) translate(0,-106) scale(1,1)" text-anchor="middle" font-family="Liberation Sans" font-size="28" fill="#ff0000">y</text><text transform="translate(993.5,552.5) rotate(27.10) translate(0,-106) scale(0.64,1)" text-anchor="middle" font-family="Liberation Sans" font-size="28" fill="#ff0000" stroke="#ff0000" stroke-width="2.2">m</text><text transform="translate(993.5,552.5) rotate(40.75) translate(0,-106) scale(1,1)" text-anchor="middle" font-family="Liberation Sans" font-size="28" fill="#ff0000">.</text><text transform="translate(993.5,552.5) rotate(59.20) translate(0,-106) scale(1,1)" text-anchor="middle" font-family="Liberation Sans" font-size="28" fill="#ff0000">c</text><text transform="translate(993.5,552.5) rotate(75.25) translate(0,-106) scale(1,1)" text-anchor="middle" font-family="Liberation Sans" font-size="28" fill="#ff0000">o</text><text transform="translate(993.5,552.5) rotate(91.30) translate(0,-106) scale(0.64,1)" text-anchor="middle" font-family="Liberation Sans" font-size="28" fill="#ff0000" stroke="#ff0000" stroke-width="2.2">m</text><text transform="translate(993.5,552.5) rotate(28.00) translate(0,130.5) scale(1,1)" text-anchor="middle" font-family="Liberation Sans" font-size="13.5" fill="#ff0000">5</text><text transform="translate(993.5,552.5) rotate(21.30) translate(0,130.5) scale(1,1)" text-anchor="middle" font-family="Liberation Sans" font-size="13.5" fill="#ff0000">1</text><text transform="translate(993.5,552.5) rotate(14.60) translate(0,130.5) scale(1,1)" text-anchor="middle" font-family="Liberation Sans" font-size="13.5" fill="#ff0000">5</text><text transform="translate(993.5,552.5) rotate(7.90) translate(0,130.5) scale(1,1)" text-anchor="middle" font-family="Liberation Sans" font-size="13.5" fill="#ff0000">y</text><text transform="translate(993.5,552.5) rotate(1.20) translate(0,130.5) scale(0.75,1)" text-anchor="middle" font-family="Liberation Sans" font-size="13.5" fill="#ff0000">m</text><text transform="translate(993.5,552.5) rotate(-5.50) translate(0,130.5) scale(1,1)" text-anchor="middle" font-family="Liberation Sans" font-size="13.5" fill="#ff0000">.</text><text transform="translate(993.5,552.5) rotate(-12.20) translate(0,130.5) scale(1,1)" text-anchor="middle" font-family="Liberation Sans" font-size="13.5" fill="#ff0000">c</text><text transform="translate(993.5,552.5) rotate(-18.90) translate(0,130.5) scale(1,1)" text-anchor="middle" font-family="Liberation Sans" font-size="13.5" fill="#ff0000">o</text><text transform="translate(993.5,552.5) rotate(-25.60) translate(0,130.5) scale(0.75,1)" text-anchor="middle" font-family="Liberation Sans" font-size="13.5" fill="#ff0000">m</text><text x="921" y="565" font-family="Liberation Sans" font-size="38" fill="#ff0000">5</text><text x="963.3" y="565" font-family="Liberation Sans" font-size="38" fill="#ff0000">5</text><path d="M951.9 565.3 H955.3 V538.2 H953 C952 541.5 949 543.8 944.7 544.9 V548 C947.6 547.4 950.3 546 951.9 544.3 Z" fill="#ff0000"/><text x="990" y="564" font-family="Liberation Serif" font-size="37" fill="#ff0000" stroke="#ff0000" stroke-width="0.6">源码</text><text transform="translate(926.25,632.8) scale(0.94,1)" text-anchor="middle" font-family="Liberation Sans" font-weight="bold" font-size="29" fill="#ff0000">5</text><path d="M942.1 632.8 H946.1 V612.3 H943 C942.3 614.6 940.6 616.3 938.4 616.9 V620.4 C939.9 620 941.2 619.3 942.1 618.4 Z" fill="#ff0000"/><text transform="translate(960.15,632.8) scale(0.94,1)" text-anchor="middle" font-family="Liberation Sans" font-weight="bold" font-size="29" fill="#ff0000">5</text><text transform="translate(977.85,632.8) scale(0.81,1)" text-anchor="middle" font-family="Liberation Sans" font-weight="bold" font-size="29" fill="#ff0000">y</text><text transform="translate(994.75,632.8) scale(0.66,1)" text-anchor="middle" font-family="Liberation Sans" font-weight="bold" font-size="29" fill="#ff0000">m</text><text transform="translate(1008.7,632.8) scale(1,1)" text-anchor="middle" font-family="Liberation Sans" font-weight="bold" font-size="29" fill="#ff0000">.</text><text transform="translate(1028.25,632.8) scale(0.91,1)" text-anchor="middle" font-family="Liberation Sans" font-weight="bold" font-size="29" fill="#ff0000">c</text><text transform="translate(1045.95,632.8) scale(0.78,1)" text-anchor="middle" font-family="Liberation Sans" font-weight="bold" font-size="29" fill="#ff0000">o</text><text transform="translate(1062.85,632.8) scale(0.66,1)" text-anchor="middle" font-family="Liberation Sans" font-weight="bold" font-size="29" fill="#ff0000">m</text></svg>
</body></html>
